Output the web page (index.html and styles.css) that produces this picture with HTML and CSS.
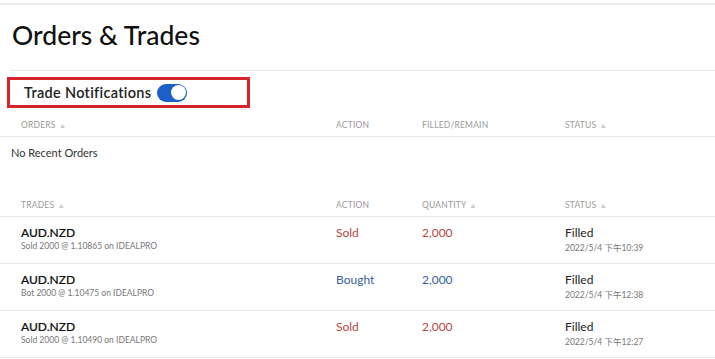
FILE: index.html
```html
<!DOCTYPE html>
<html>
<head>
	<meta charset="utf-8">
	<title>Orders &amp; Trades</title>
	<link rel="stylesheet" href="styles.css">
</head>
<body>
	<div class="topline"></div>
	<h1 class="title">Orders &amp; Trades</h1>
	<div class="rule"></div>

	<div class="notify">
		<span>Trade Notifications</span>
		<span class="toggle"><span class="knob"></span></span>
	</div>

	<!-- orders -->
	<div class="grid head">
		<div>ORDERS <span class="arrow">&#9650;</span></div>
		<div>ACTION</div>
		<div>FILLED/REMAIN</div>
		<div>STATUS <span class="arrow">&#9650;</span></div>
	</div>
	<div class="empty">No Recent Orders</div>

	<!-- trades -->
	<div class="grid head">
		<div>TRADES <span class="arrow">&#9650;</span></div>
		<div>ACTION</div>
		<div>QUANTITY <span class="arrow">&#9650;</span></div>
		<div>STATUS <span class="arrow">&#9650;</span></div>
	</div>
	<div class="grid row">
		<div><div class="sym">AUD.NZD</div><div class="sub">Sold 2000 @ 1.10865 on IDEALPRO</div></div>
		<div class="sold">Sold</div>
		<div class="sold">2,000</div>
		<div><div class="stat">Filled</div><div class="sub">2022/5/4 下午10:39</div></div>
	</div>
	<div class="grid row">
		<div><div class="sym">AUD.NZD</div><div class="sub">Bot 2000 @ 1.10475 on IDEALPRO</div></div>
		<div class="bought">Bought</div>
		<div class="bought">2,000</div>
		<div><div class="stat">Filled</div><div class="sub">2022/5/4 下午12:38</div></div>
	</div>
	<div class="grid row">
		<div><div class="sym">AUD.NZD</div><div class="sub">Sold 2000 @ 1.10490 on IDEALPRO</div></div>
		<div class="sold">Sold</div>
		<div class="sold">2,000</div>
		<div><div class="stat">Filled</div><div class="sub">2022/5/4 下午12:27</div></div>
	</div>
</body>
</html>
```

FILE: styles.css
```css
body {
  margin: 0;
  background: #fff;
  color: #222;
  font-family: "Lato", "Noto Sans CJK TC", sans-serif;
}

.topline {
  margin-top: 3px;
  height: 2px;
  background: #ebebeb;
}

.title {
  margin: 0;
  padding: 14px 0 0 12px;
  height: 51px;
  font-size: 26.5px;
  font-weight: 500;
  color: #111;
}

.rule {
  margin-left: 10px;
  border-top: 1px solid #e6e6e6;
}

.notify {
  margin: 6px 0 0 7px;
  height: 25px;
  border: 3px solid #d6242b;
  display: flex;
  align-items: center;
  gap: 6px;
  padding-left: 14px;
  box-sizing: content-box;
  width: 223px;
  font-size: 14.5px;
  font-weight: 600;
  letter-spacing: 0.3px;
  color: #222;
}

.toggle {
  display: flex;
  align-items: center;
  justify-content: flex-end;
  width: 30px;
  height: 18px;
  border-radius: 9px;
  background: #1b5fc9;
  padding: 0 1px;
  box-sizing: border-box;
}

.knob {
  width: 15px;
  height: 15px;
  border-radius: 50%;
  background: #fff;
}

.grid {
  display: grid;
  grid-template-columns: 315px 86px 143px 1fr;
  padding-left: 21px;
  border-bottom: 1px solid #e8e8e8;
}

.head {
  height: 29px;
  padding-top: 6px;
  box-sizing: border-box;
  align-items: center;
  font-size: 8.5px;
  color: #999;
  letter-spacing: 0.2px;
}

.arrow {
  font-size: 5px;
  color: #ccc;
  vertical-align: middle;
  margin-left: 2px;
}

.empty {
  padding: 9px 0 0 11px;
  height: 51px;
  box-sizing: border-box;
  font-size: 11px;
  color: #333;
}

.row {
  height: 47px;
  padding-top: 8px;
  box-sizing: border-box;
  font-size: 12px;
}

.sym {
  font-size: 12px;
  font-weight: 500;
  color: #111;
  -webkit-text-stroke: 0.2px #111;
}

.stat {
  font-size: 12px;
  color: #222;
}

.sub {
  margin-top: 1px;
  font-size: 8.5px;
  color: #777;
}

.sold {
  color: #b64843;
}

.bought {
  color: #35609c;
}
```
